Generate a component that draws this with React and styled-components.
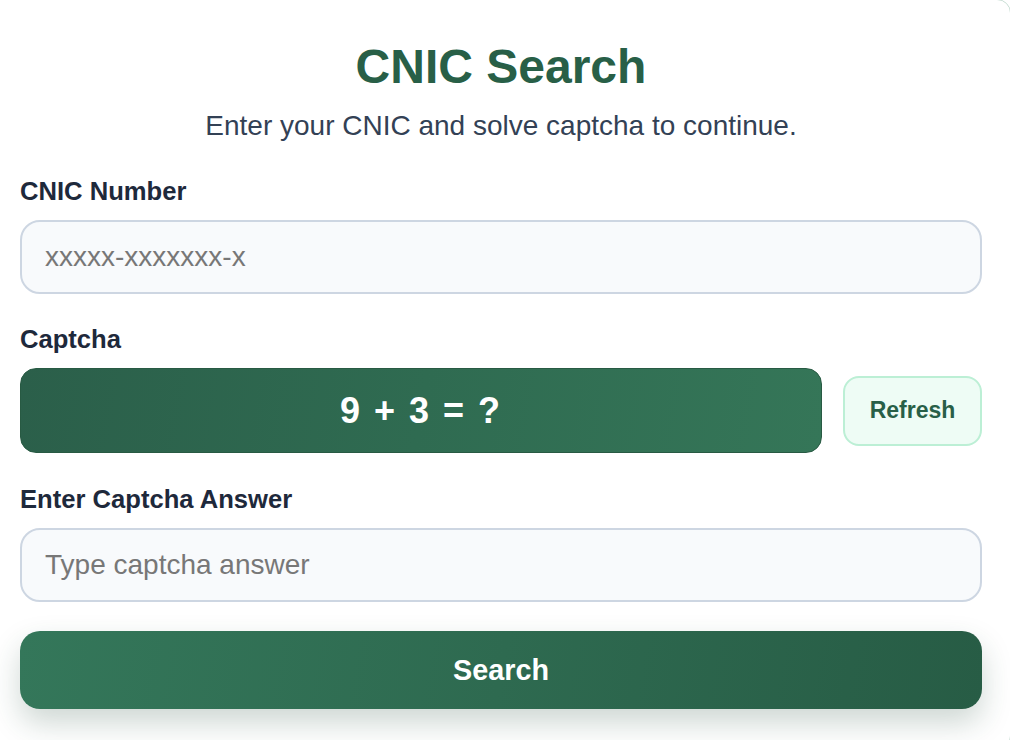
import React from 'react';
import styled, { createGlobalStyle } from 'styled-components';

const GlobalStyle = createGlobalStyle`
  html, body {
    margin: 0;
    padding: 0;
    background: #ffffff;
    overflow: hidden;
  }
  body {
    font-family: "Liberation Sans", Arial, Helvetica, sans-serif;
  }
  * {
    box-sizing: border-box;
  }
`;

const Card = styled.form`
  width: 1031px;
  margin: -1px 0 0 -20px;
  padding: 39px 28px 40px 39px;
  background: #ffffff;
  border: 1px solid #c9ded4;
  border-radius: 14px;
  display: flex;
  flex-direction: column;
`;

const Title = styled.h1`
  margin: 0;
  font-size: 48px;
  line-height: 56px;
  font-weight: 700;
  color: #285f47;
  text-align: center;
`;

const Subtitle = styled.p`
  margin: 14px 0 0;
  font-size: 28px;
  line-height: 34px;
  color: #334155;
  text-align: center;
`;

const Field = styled.div`
  display: flex;
  flex-direction: column;
  margin-top: ${p => p.$top}px;
`;

const Label = styled.label`
  font-size: 25.6px;
  line-height: 30px;
  font-weight: 700;
  color: #1e293b;
  margin-bottom: 14px;
`;

const Input = styled.input`
  width: 100%;
  height: 74px;
  padding: 0 23px;
  font-family: inherit;
  font-size: 28px;
  color: #1e293b;
  background: #f8fafc;
  border: 2px solid #cdd6e2;
  border-radius: 20px;
  outline: none;

  &::placeholder {
    color: #777777;
  }
`;

const CaptchaRow = styled.div`
  display: flex;
  align-items: center;
  gap: 21px;
`;

const CaptchaBox = styled.div`
  flex: 1;
  height: 85px;
  display: flex;
  align-items: center;
  justify-content: center;
  border-radius: 16px;
  border: 1px solid #285a43;
  background: linear-gradient(100deg, #2b5f4a 0%, #2f6b51 50%, #357658 100%);
  color: #ffffff;
  font-size: 36px;
  font-weight: 700;
  letter-spacing: 2px;
  user-select: none;
`;

const RefreshButton = styled.button`
  width: 139px;
  height: 70px;
  border-radius: 16px;
  border: 2px solid #bcefd5;
  background: #eefcf5;
  color: #285f47;
  font-family: inherit;
  font-size: 23px;
  font-weight: 700;
  cursor: pointer;
`;

const SearchButton = styled.button`
  margin-top: 29px;
  width: 100%;
  height: 78px;
  border: none;
  border-radius: 20px;
  background: linear-gradient(100deg, #34775a 0%, #2e6a50 50%, #275c45 100%);
  color: #ffffff;
  font-family: inherit;
  font-size: 28.8px;
  font-weight: 700;
  cursor: pointer;
  box-shadow: 0 14px 30px rgba(32, 74, 55, 0.22);
`;

export default function App() {
  return (
    <>
      <GlobalStyle />
      <Card onSubmit={e => e.preventDefault()}>
        <Title>CNIC Search</Title>
        <Subtitle>Enter your CNIC and solve captcha to continue.</Subtitle>

        <Field $top={33}>
          <Label htmlFor="cnic">CNIC Number</Label>
          <Input id="cnic" type="text" placeholder="xxxxx-xxxxxxx-x" />
        </Field>

        <Field $top={30}>
          <Label>Captcha</Label>
          <CaptchaRow>
            <CaptchaBox>9 + 3 = ?</CaptchaBox>
            <RefreshButton type="button">Refresh</RefreshButton>
          </CaptchaRow>
        </Field>

        <Field $top={31}>
          <Label htmlFor="answer">Enter Captcha Answer</Label>
          <Input id="answer" type="text" placeholder="Type captcha answer" />
        </Field>

        <SearchButton type="submit">Search</SearchButton>
      </Card>
    </>
  );
}
